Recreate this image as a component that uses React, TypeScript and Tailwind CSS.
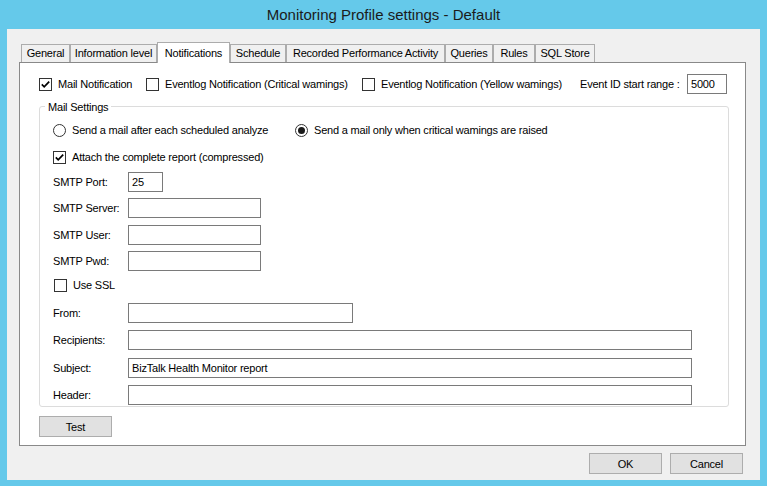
import type { ReactNode } from "react";

const tabs = [
  { label: "General", w: "w-[49px]" },
  { label: "Information level", w: "w-[87px]" },
  { label: "Notifications", w: "w-[73px]", active: true },
  { label: "Schedule", w: "w-[56px]" },
  { label: "Recorded Performance Activity", w: "w-[159px]" },
  { label: "Queries", w: "w-[48px]" },
  { label: "Rules", w: "w-[42px]" },
  { label: "SQL Store", w: "w-[60px]" },
];

function CheckBox({ checked }: { checked?: boolean }) {
  return (
    <span className="flex h-[13px] w-[13px] shrink-0 items-center justify-center border border-[#333333] bg-white">
      {checked && (
        <svg width="11" height="11" viewBox="0 0 11 11">
          <path d="M1.8 5.4 L4.2 7.8 L9.2 2.6" fill="none" stroke="#000" strokeWidth="1.7" />
        </svg>
      )}
    </span>
  );
}

function Radio({ checked }: { checked?: boolean }) {
  return (
    <span className="flex h-[13px] w-[13px] shrink-0 items-center justify-center rounded-full border border-[#333333] bg-white">
      {checked && <span className="h-[7px] w-[7px] rounded-full bg-[#1a1a1a]" />}
    </span>
  );
}

function Field({
  label,
  width,
  value,
  className,
}: {
  label: string;
  width: string;
  value?: string;
  className?: string;
}) {
  return (
    <div className={`flex h-[20px] items-center ${className ?? ""}`}>
      <span className="w-[75px] shrink-0">{label}</span>
      <div className={`h-[20px] ${width} flex items-center border border-[#7a7a7a] bg-white pl-[3px]`}>
        {value}
      </div>
    </div>
  );
}

function Button({ children, className }: { children: ReactNode; className?: string }) {
  return (
    <button
      className={`flex h-[21px] w-[73px] items-center justify-center border border-[#adadad] bg-[#e1e1e1] pt-[2px] ${className ?? ""}`}
    >
      {children}
    </button>
  );
}

export default function App() {
  return (
    <div
      className="flex h-[486px] w-[767px] flex-col bg-[#65c9ea] text-[11px] tracking-[-0.2px] text-black"
      style={{ fontFamily: '"Liberation Sans", Arial, sans-serif' }}
    >
      {/* Title bar */}
      <div className="flex h-[29px] items-center justify-center pt-[2px] text-[15px] tracking-normal text-[#1b1b1b]">
        Monitoring Profile settings - Default
      </div>

      {/* Client area */}
      <div className="mx-[7px] flex h-[451px] flex-col bg-[#f0f0f0] pl-[12px] pt-[13px]">
        {/* Tab strip */}
        <div className="relative z-10 flex h-[20px] items-end pl-[2px]">
          {tabs.map((tab) =>
            tab.active ? (
              <div
                key={tab.label}
                className={`${tab.w} -mb-px flex h-[21px] items-start justify-center border border-b-0 border-[#acacac] bg-white pt-[2px]`}
              >
                {tab.label}
              </div>
            ) : (
              <div
                key={tab.label}
                className={`${tab.w} flex h-[18px] items-center justify-center border border-b-0 border-[#acacac] bg-[#f0f0f0]`}
              >
                {tab.label}
              </div>
            )
          )}
        </div>

        {/* Notifications page */}
        <div className="h-[384px] w-[727px] border border-[#898989] bg-white pl-[19px] pt-[11px]">
          <div className="flex h-[20px] items-center">
            <label className="flex w-[107px] items-center gap-[6px]">
              <CheckBox checked />
              Mail Notification
            </label>
            <label className="flex w-[216px] items-center gap-[6px]">
              <CheckBox />
              Eventlog Notification (Critical wamings)
            </label>
            <label className="flex w-[218px] items-center gap-[6px]">
              <CheckBox />
              Eventlog Notification (Yellow wamings)
            </label>
            <span className="w-[107px]">Event ID start range :</span>
            <div className="flex h-[20px] w-[40px] items-center border border-[#7a7a7a] pl-[3px]">5000</div>
          </div>

          {/* Mail Settings group */}
          <div className="relative mt-[12px] h-[301px] w-[690px] rounded-[3px] border border-[#dcdcdc] pl-[13px] pt-[15px]">
            <span className="absolute -top-[8px] left-[5px] bg-white px-[3px]">Mail Settings</span>

            <div className="flex h-[16px] items-center">
              <label className="flex w-[242px] items-center gap-[6px]">
                <Radio />
                Send a mail after each scheduled analyze
              </label>
              <label className="flex items-center gap-[6px]">
                <Radio checked />
                Send a mail only when critical wamings are raised
              </label>
            </div>

            <label className="mt-[11px] flex h-[16px] items-center gap-[6px]">
              <CheckBox checked />
              Attach the complete report (compressed)
            </label>

            <Field label="SMTP Port:" width="w-[35px]" value="25" className="mt-[7px]" />
            <Field label="SMTP Server:" width="w-[133px]" className="mt-[6px]" />
            <Field label="SMTP User:" width="w-[133px]" className="mt-[7px]" />
            <Field label="SMTP Pwd:" width="w-[133px]" className="mt-[6px]" />

            <label className="mt-[6px] flex h-[16px] items-center gap-[6px] pl-[1px]">
              <CheckBox />
              Use SSL
            </label>

            <Field label="From:" width="w-[225px]" className="mt-[10px]" />
            <Field label="Recipients:" width="w-[564px]" className="mt-[7px]" />
            <Field label="Subject:" width="w-[564px]" value="BizTalk Health Monitor report" className="mt-[8px]" />
            <Field label="Header:" width="w-[564px]" className="mt-[7px]" />
          </div>

          <Button className="mt-[9px]">Test</Button>
        </div>

        {/* Dialog buttons */}
        <div className="mt-[7px] flex justify-end gap-[8px] pr-[17px]">
          <Button>OK</Button>
          <Button>Cancel</Button>
        </div>
      </div>
    </div>
  );
}
